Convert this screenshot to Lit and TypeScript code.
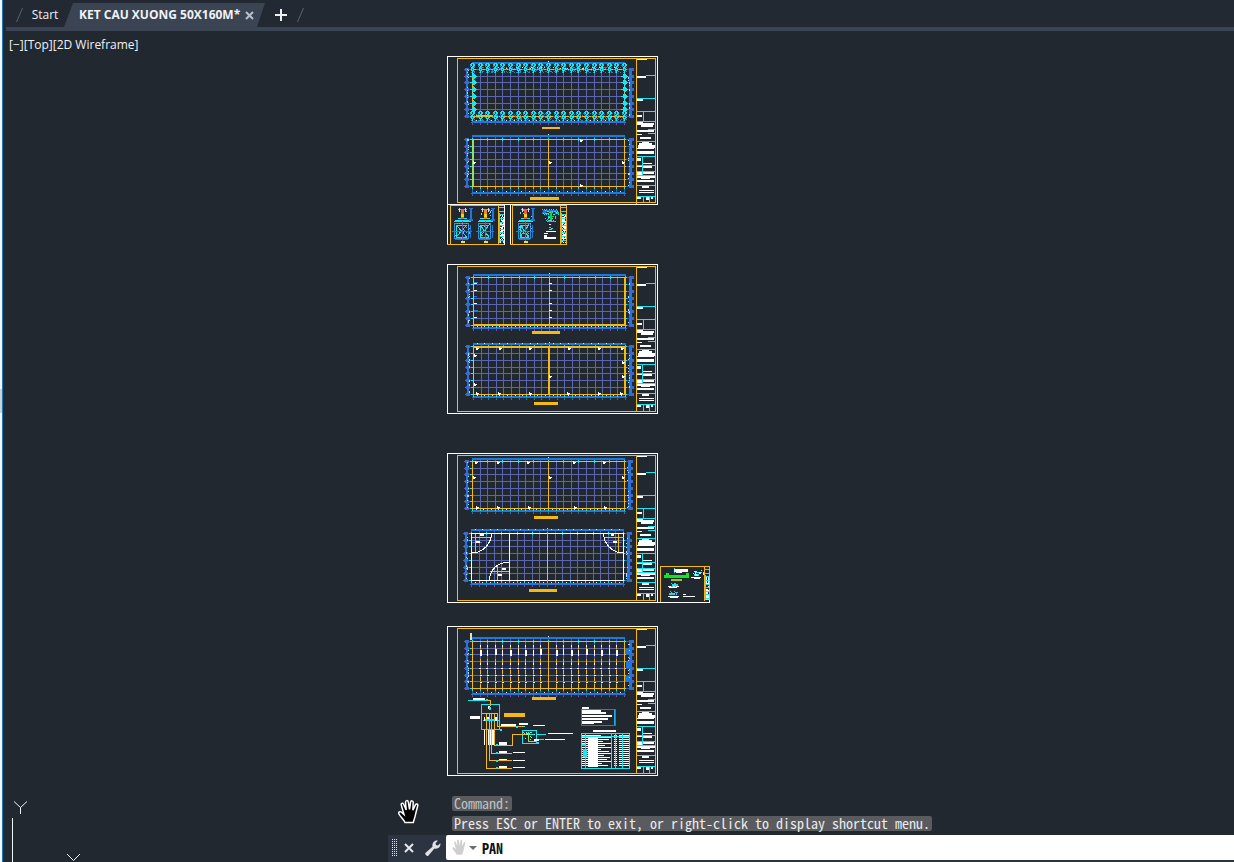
import { LitElement, html, svg, css } from "lit";
import { customElement } from "lit/decorators.js";

const WHITE = "#ffffff";
const GOLD = "#f5b914";
const CYAN = "#19e6ee";
const BLUE = "#1b7ae0";
const GRID = "#5c66ae";

type Box = [number, number, number, number];

const fill = (c: string, boxes: Box[]) => svg`<path fill=${c} d=${boxes
  .map(([x, y, w, h]) => `M${x} ${y}h${w}v${h}h${-w}z`)
  .join("")}></path>`;
const stroke = (c: string, d: string, w = 1) =>
  svg`<path fill="none" stroke=${c} stroke-width=${w} d=${d}></path>`;

/* Repeatable pixel noise for lettering too small to read. */
const noise = (seed: number) => {
  let s = seed * 7919 + 13;
  return () => ((s = (s * 16807) % 2147483647) / 2147483647);
};
const specks = (seed: number, c: string, x: number, y: number, w: number, h: number, density: number) => {
  const r = noise(seed);
  const out: Box[] = [];
  for (let j = 0; j < h; j++)
    for (let i = 0; i < w; i++) if (r() < density) out.push([x + i, y + j, 1, 1]);
  return fill(c, out);
};

/* Title block, measured in thirds of a unit from the sheet's corner. */
const TITLE_TEXT: Box[] = [
  [20, 6, 30, 6], [20, 60, 28, 6], [20, 129, 17, 6], [20, 177, 15, 6], [20, 195, 18, 6], [20, 201, 52, 5],
  [34, 207, 36, 5], [20, 221, 52, 6], [22, 233, 14, 4], [30, 243, 34, 6], [36, 257, 22, 4], [28, 261, 40, 6],
  [23, 267, 50, 9], [21, 276, 51, 4], [21, 285, 51, 10], [22, 307, 12, 9], [40, 321, 26, 3], [22, 327, 14, 6], [40, 331, 28, 5],
  [22, 345, 14, 12], [38, 348, 32, 6], [20, 360, 53, 6], [32, 366, 28, 3], [22, 371, 50, 6], [36, 390, 20, 6],
  [26, 401, 44, 3], [26, 408, 44, 3], [22, 422, 12, 6], [48, 422, 8, 9], [64, 422, 7, 6],
];
const titleBlock = (top: number) => svg`
  ${fill(WHITE, TITLE_TEXT.map(([x, y, w, h]) =>
    [630 + Math.round(x / 3), top + Math.round(y / 3), Math.round(w / 3), Math.max(1, Math.round(h / 3))] as Box))}
  ${fill(CYAN, [43, 56, 66, 74, 78, 86, 101, 110, 116, 120, 130, 141]
    .map((d) => [d > 70 && d < 80 ? 648 : 637, top + d - 1, d > 70 && d < 80 ? 7 : 18, 1] as Box))}
  ${fill(CYAN, [[646, top + 19, 9, 1], [643, top + 55, 1, 10], [642, top + 100, 1, 20], [643, top + 140, 1, 7], [649, top + 140, 1, 7]])}
  ${fill(GOLD, [[636, top + 2, 1, 146]])}`;

const sheet = (top: number, height: number) => svg`
  ${titleBlock(top)}
  <rect x="447.5" y=${top + 0.5} width="210" height=${height} fill="none" stroke=${WHITE}></rect>
  <rect x="457.5" y=${top + 2.5} width="198" height=${height - 4} fill="none" stroke=${GOLD}></rect>`;

interface Plan {
  x: number; top: number; bottom: number;
  dimTop: number; dimBottom: number; right: number;
  label: Box; frame?: string; seed: number; dotsTop?: boolean;
}

const plan = (p: Plan) => {
  const w = 152;
  const h = p.bottom - p.top;
  const cols = Array.from({ length: 21 }, (_, i) => p.x + Math.round(i * 7.6));
  const rows = Array.from({ length: 8 }, (_, i) => p.top + Math.round((i * h) / 7));
  const x2 = p.x + w;
  const left = p.x - 6;
  return svg`
    ${stroke(GRID, cols.map((x) => `M${x + 0.5} ${p.top}v${h}`).join("") + rows.map((y) => `M${p.x} ${y + 0.5}h${w}`).join(""))}
    ${stroke("#2c62a8", cols.map((x) => `M${x + 0.5} ${p.dimTop}V${p.top}M${x + 0.5} ${p.bottom}V${p.dimBottom + 3}`).join("") +
      rows.map((y) => `M${left} ${y + 0.5}H${p.x}M${x2} ${y + 0.5}H${p.right + 2}`).join(""))}
    ${fill(BLUE, [[p.x, p.dimTop, w + 1, 2], [p.x, p.dimBottom, w + 1, 2], [left, p.top, 2, h], [p.right - 1, p.top, 3, h]])}
    ${fill("#3f68c9", [
      ...cols.map((x) => [x - 1, p.dimBottom + 1, 3, 1] as Box),
      ...rows.map((y) => [left - 1, y - 1, 4, 3] as Box),
      ...rows.map((y) => [p.right - 1, y - 1, 5, 3] as Box),
    ])}
    ${fill("#8c4da8", [...cols.map((x) => [x, p.dimBottom + 3, 1, 1] as Box), ...rows.map((y) => [left - 2, y, 1, 1] as Box)])}
    ${fill(CYAN, [
      ...cols.filter((_, i) => i % 2 === 0).map((x) => [x, p.top - 1, 1, 3] as Box),
      ...cols.map((x) => [x, p.bottom + 1, 1, 2] as Box),
      ...rows.map((y) => [p.x - 2, y, 3, 1] as Box),
      ...rows.map((y) => [x2, y, 2, 1] as Box),
    ])}
    ${fill("#d7ecff", [
      ...cols.slice(1).map((x) => [x - 4, p.dimBottom - 1, 1, 1] as Box),
      ...(p.dotsTop ? cols.slice(1).map((x) => [x - 4, p.dimTop, 1, 1] as Box) : []),
      [p.x + 76, p.dimTop - 1, 1, 1],
    ])}
    ${specks(p.seed, "#a9dcff", left + 1, p.top, 2, h, 0.16)}
    ${specks(p.seed + 3, "#a9dcff", p.right - 2, p.top, 2, h, 0.14)}
    <rect x=${p.x + 0.5} y=${p.top + 0.5} width=${w} height=${h} fill="none" stroke=${p.frame ?? GOLD}></rect>
    ${fill(GOLD, [p.label])}`;
};

const centre = (x: number, top: number, h: number, w = 1) => fill(GOLD, [[x, top, w, h]]);

/* Column footing mark on the foundation plan. */
const footing = (x: number, y: number) => svg`
  <path transform="translate(${x} ${y})" fill=${CYAN} d="M-1-5h3v1h1v2h-1v1h-1v1h1v1h1v1h-1v1h-1v2h-1v-2h-1v-1h-1v-1h1v-2h1v-1h-1v-1h-1v-1h1z"></path>
  <path transform="translate(${x} ${y})" fill="#1b9fc4" d="M-2-3h1v2h-1zM2-1h1v1h-1zM-2 1h1v1h-1zM2 3h1v1h-1zM-1 4h1v1h-1z"></path>
  <path transform="translate(${x} ${y})" fill="#1f3f5c" d="M0-4h1v2h-1zM0 1h1v1h-1z"></path>`;
const padRow = (x: number, y: number) =>
  svg`<path transform="translate(${x} ${y})" fill=${CYAN} d="M-3 0h2v-2h1v-1h1v1h1v1h1v1h1v1h-1v1h-1v1h-2v-1h-1v-1h-2z"></path>`;

const foundation = () => {
  const marks = [];
  for (let i = 0; i <= 20; i++) {
    const x = 472 + Math.round(i * 7.6);
    marks.push(footing(x, 68), footing(x, 116));
  }
  for (let i = 1; i < 7; i++) {
    const y = 69 + Math.round(i * 6.7);
    marks.push(padRow(473, y), padRow(624, y));
  }
  return svg`${specks(5, "#2f7fc4", 472, 65, 153, 8, 0.16)}${specks(6, "#2f7fc4", 472, 113, 153, 8, 0.16)}
    ${specks(7, "#cdf7b0", 472, 67, 153, 2, 0.1)}${marks}${fill("#c9c23c", [[476, 115, 17, 2]])}`;
};

const flags = (pts: [number, number][]) =>
  fill(WHITE, pts.flatMap(([x, y]) => [[x, y, 3, 1], [x, y - 1, 1, 3], [x + 1, y + 1, 1, 1]] as Box[]));

/* Section above the plan of one foundation type. */
const footingDetail = (x: number, y: number, w: number, seed: number, hot = "#f08a24") => {
  const mid = x + Math.floor(w / 2);
  return svg`
  ${specks(seed, "#8fc6ff", x + 2, y, w, 10, 0.1)}
  ${fill(BLUE, [[x + w, y, 2, 10], [x + w - 1, y + 10, 4, 2], [x + w - 1, y - 1, 4, 1]])}
  ${fill(CYAN, [[mid - 4, y, 9, 1], [x + 1, y + 11, w - 2, 1], [mid - 4, y + 9, 9, 1], [x, y + 12, w + 1, 1]])}
  ${fill("#d8dcf0", [[mid - 3, y - 1, 1, 4], [mid + 3, y - 1, 1, 4]])}
  ${fill(hot, [[mid - 1, y, 3, 10]])}
  ${fill("#f2d21c", [[mid - 1, y + 5, 3, 3]])}
  <rect x=${x + 0.5} y=${y + 14.5} width=${w - 2} height="15" fill="none" stroke="#2f8fd0"></rect>
  ${stroke(CYAN, `M${x + 2} ${y + 16}l${w - 5} 12M${x + w - 3} ${y + 16}l${-(w - 5)} 12M${x + 2} ${y + 16.5}h${w - 5}M${x + 2} ${y + 28.5}h${w - 5}M${x + 2.5} ${y + 16}v12`)}
  ${stroke(GRID, `M${x - 2} ${y + 22.5}h${w + 4}M${mid + 0.5} ${y + 12}v20`)}
  ${specks(seed + 20, "#55b8ff", x, y + 14, w, 16, 0.1)}
  ${fill(BLUE, [[x + 1, y + 30, w - 3, 1], [x + w, y + 16, 1, 13]])}
  ${fill("#e7e33a", [[mid - 1, y + 32, 4, 2]])}`;
};

/* Narrow title strip of a detail sheet. */
const smallTitle = (x: number, y: number, w: number, h: number, seed: number) => svg`
  ${specks(seed, WHITE, x + 2, y + 9, w - 2, h - 10, 0.6)}
  ${fill(CYAN, [2, 6, 9, 13, 17, 20, 24, 27, 31, 35].filter((d) => d < h).map((d) => [x, y + d, w, 1] as Box))}
  ${fill(CYAN, [[x + 1, y + 8, 1, h - 9]])}
  ${stroke(GOLD, `M${x + 0.5} ${y}v${h}`)}`;

const detailSheets = () => svg`
  ${smallTitle(498, 205, 6, 39, 31)}
  ${footingDetail(454, 209, 16, 41, "#ee6a3a")}
  ${footingDetail(478, 209, 14, 47)}
  ${stroke(GOLD, "M450.5 244V205.5H504M447 244.5H504")}
  ${stroke(WHITE, "M447.5 204V244M504.5 205V245")}
  ${smallTitle(560, 205, 6, 39, 37)}
  ${footingDetail(518, 209, 14, 53, "#ee5a4a")}
  ${fill(BLUE, [[543, 210, 15, 2], [542, 212, 4, 2], [555, 212, 4, 2]])}
  ${specks(61, CYAN, 541, 209, 18, 6, 0.35)}
  ${fill("#10d93a", [[550, 211, 2, 11], [548, 216, 6, 1], [547, 221, 8, 1]])}
  ${specks(62, "#4ccfe0", 545, 216, 11, 6, 0.3)}
  ${fill(CYAN, [[549, 227, 2, 1], [551, 228, 2, 1], [549, 229, 3, 1]])}
  ${fill(WHITE, [[546, 231, 10, 1], [544, 233, 4, 1], [544, 235, 3, 2], [544, 237, 12, 2], [549, 224, 2, 1]])}
  ${stroke(GOLD, "M512.5 244V205.5H566.5V244.5H510")}
  ${stroke(WHITE, "M510.5 205V244")}`;

const arcs = () => svg`
  ${stroke(GRID, "M472 542.5h10M604 542.5h18")}
  ${stroke(GOLD, "M475.5 534v19M472 537.5h20M618.5 534v19M604 537.5h20M497.5 566v14M490 571.5h19")}
  ${stroke(WHITE, "M509.5 533V580M491.5 533c0 10-8 20-20 20M603.5 533c0 10 8 20 20 20M489.5 580c0-10 8-18 20-18")}
  ${fill(WHITE, [[480, 534, 4, 2], [476, 541, 4, 2], [611, 534, 3, 2], [613, 541, 4, 2], [502, 568, 4, 2], [498, 574, 4, 2]])}`;

const sideSheet = () => svg`
  ${smallTitle(704, 567, 5, 34, 71)}
  ${fill("#0be81f", [[664, 575, 25, 3], [666, 573, 3, 2], [686, 573, 3, 2]])}
  ${fill(CYAN, [[674, 568, 1, 5], [666, 573, 1, 1], [672, 584, 5, 2], [670, 593, 5, 2], [694, 574, 5, 2], [696, 572, 6, 1]])}
  ${fill("#9ac229", [[671, 579, 11, 2]])}
  ${fill(WHITE, [[674, 569, 14, 3], [676, 572, 6, 1], [668, 586, 11, 1], [669, 587, 8, 1], [668, 596, 11, 1], [670, 597, 8, 1],
    [683, 594, 3, 1], [683, 596, 12, 1], [691, 577, 10, 1], [694, 578, 6, 1]])}
  ${specks(73, "#bfe8ff", 693, 570, 11, 6, 0.3)}
  ${specks(74, "#4ab4e8", 669, 583, 9, 4, 0.4)}
  ${specks(75, "#4ab4e8", 669, 591, 9, 4, 0.4)}
  ${stroke(GOLD, "M660.5 602V566.5H709.5V602")}
  ${stroke(WHITE, "M658 602.5h52M709.5 600v3")}`;

/* Lamp circuits on the electrical plan. */
const lighting = () => {
  const gold: Box[] = [];
  const white: Box[] = [];
  for (let i = 1; i < 20; i++) {
    if (i === 10) continue;
    const x = 472 + Math.round(i * 7.6);
    for (const y of [645, 659, 670, 677, 684]) gold.push([x, y, 1, 4]);
    white.push([x, 645, 1, 2], [x, i % 3 ? 650 : 649, i % 2 ? 2 : 1, 6], [x, 663, 1, 2], [x - 1, 668, 2, 1], [x, 675, 2, 1], [x, 682, 2, 1]);
  }
  return svg`${fill(GOLD, gold)}${fill(WHITE, white)}
    ${fill("#1b7ae0", [[625, 648, 4, 6], [626, 661, 4, 7], [625, 676, 4, 6]])}
    ${fill("#d8e8c0", [[470, 633, 2, 7]])}`;
};

const wiring = () => {
  const rows = Array.from({ length: 16 }, (_, i) => 735 + i * 2);
  return svg`
    ${fill(GOLD, [[504, 713, 21, 4]])}
    ${stroke(CYAN, "M481.5 704.5h18v25h-18zM522.5 730.5h14v13h-14zM468 700.5h18M517 726.5h8M483 720.5h16M524 734.5h10M536 734.5h10M536 739.5h8M528.5 732v9")}
    ${fill(WHITE, [[473, 698, 12, 2], [470, 716, 10, 3], [484, 730, 1, 15], [488, 730, 1, 15], [490, 730, 1, 15], [492, 730, 2, 15],
      [484, 717, 1, 4], [487, 717, 2, 3], [491, 716, 1, 4], [494, 717, 3, 4], [488, 706, 2, 3], [501, 724, 15, 2], [519, 723, 9, 2], [533, 725, 12, 1],
      [499, 742, 8, 3], [499, 751, 8, 3], [499, 759, 8, 2], [499, 766, 8, 2], [513, 752, 12, 1], [513, 760, 12, 1], [513, 767, 12, 1],
      [548, 733, 25, 1], [545, 739, 20, 1], [534, 739, 5, 2]])}
    ${stroke(GOLD, "M487 700.5H490.5V706M482 713.5h15M486.5 713V768.5H512M489.5 713V760.5H512M491.5 713V753.5H512M494.5 713V745.5H512.5V734.5H530M497.5 713V726.5H523")}
    ${fill(CYAN, [[485, 719, 10, 2], [496, 744, 2, 2], [496, 752, 2, 2], [496, 760, 2, 2], [496, 767, 2, 2], [516, 726, 2, 2], [486, 699, 2, 2],
      [500, 729, 2, 2], [489, 707, 2, 3], [537, 742, 2, 2]])}
    ${specks(81, "#8fe6c8", 523, 732, 13, 8, 0.15)}
    ${fill("#9ae04a", [[528, 734, 1, 8], [529, 741, 7, 1]])}
    ${fill(WHITE, [[582, 707, 7, 2], [582, 710, 19, 2], [582, 712, 24, 2], [582, 715, 30, 2], [582, 718, 26, 2], [582, 721, 20, 2], [582, 723, 12, 1],
      [593, 730, 23, 2]])}
    ${stroke(GRID, "M581.5 709.5h34v16h-34z")}
    ${stroke("#1fa8e8", "M614.5 710v15")}
    ${fill(WHITE, rows.map((y, i) => [589, y, [12, 22, 20, 14, 23, 16, 22, 12, 20, 23, 15, 21, 18, 23, 13, 19][i], 1] as Box))}
    ${fill(WHITE, rows.flatMap((y) => [[582, y, 3, 1], [586, y, 2, 1], [588, y, 10, 2], [614, y, 3, 1], [619, y, 3, 1], [623, y, 6, 1]] as Box[]))}
    ${stroke(CYAN, "M581.5 733.5h48v35h-48zM585.5 733v36M611.5 733v36M615.5 733v36M622.5 733v36M582 736.5h48")}
    ${fill(CYAN, [[583, 749, 4, 8], [582, 744, 3, 2]])}`;
};

const PLANS: Plan[] = [
  { x: 472, top: 69, bottom: 116, dimTop: 62, dimBottom: 121, right: 630, label: [542, 127, 18, 2], seed: 1 },
  { x: 472, top: 139, bottom: 186, dimTop: 135, dimBottom: 192, right: 630, label: [530, 197, 29, 3], seed: 2 },
  { x: 473, top: 277, bottom: 325, dimTop: 274, dimBottom: 327, right: 630, label: [532, 331, 28, 3], seed: 3 },
  { x: 473, top: 346, bottom: 394, dimTop: 343, dimBottom: 396, right: 630, label: [534, 402, 24, 3], seed: 4, dotsTop: true },
  { x: 472, top: 461, bottom: 508, dimTop: 458, dimBottom: 510, right: 629, label: [534, 516, 24, 3], seed: 5 },
  { x: 471, top: 533, bottom: 580, dimTop: 529, dimBottom: 583, right: 628, label: [529, 589, 28, 3], seed: 6, frame: WHITE, dotsTop: true },
  { x: 472, top: 641, bottom: 688, dimTop: 637, dimBottom: 693, right: 630, label: [532, 697, 24, 3], seed: 7 },
];

const drawing = () => svg`
  <g transform="translate(-3 -31)">
    ${sheet(56, 148)}${sheet(264, 149)}${sheet(453, 149)}${sheet(626, 149)}
    ${PLANS.map(plan)}
    ${foundation()}
    ${centre(548, 139, 48)}
    ${fill("#8fe06a", [[472, 140, 2, 46]])}
    ${flags([[473, 162], [549, 162], [622, 162], [580, 140], [580, 185]])}
    ${fill(GOLD, [[474, 324, 152, 2], [624, 277, 2, 48]])}
    ${stroke(GOLD, "M549.5 277v48")}
    ${fill(WHITE, [283, 290, 303, 310, 317].flatMap((y) => [[549, y, 3, 1], [474, y, 3, 1]] as Box[]))}
    ${fill(BLUE, [[474, 282, 4, 1], [474, 296, 3, 1], [474, 310, 4, 1]])}
    ${fill(GOLD, [[474, 346, 152, 2], [548, 346, 2, 49], [624, 346, 2, 49]])}
    ${flags([[476, 348], [499, 348], [529, 348], [568, 348], [598, 348], [621, 348], [476, 393], [498, 393], [529, 393], [567, 393],
      [598, 393], [620, 393], [474, 355], [474, 384], [549, 376], [622, 362], [622, 376]])}
    ${centre(548, 461, 48)}
    ${flags([[475, 462], [497, 462], [527, 462], [573, 462], [603, 462], [476, 507], [497, 507], [528, 507], [574, 507], [604, 507],
      [473, 477], [549, 477], [622, 477]])}
    ${centre(547, 533, 48)}${arcs()}
    ${centre(548, 641, 48)}${lighting()}${wiring()}
    ${detailSheets()}${sideSheet()}
    ${stroke("#f2f4f6", "M12.5 818V862")}
    <path shape-rendering="auto" fill="none" stroke="#f2f4f6" d="M14 801.5l6.500 6 6.500-6M20.500 807.500v6.500M67 854l6.500 6.500 6.500-6.500"></path>
  </g>`;

const HAND =
  "M7 23 C6 20 2 17 1 14.500 C0 12.500 2 11.500 3.500 12.800 L6 15 L3.300 5.600 C2.800 3.500 5 3 5.700 4.800 L8.200 10.500 L7.500 2.800 C7.500 .6 10 .6 10.300 2.600 L11.500 10 L12.600 2.600 C13 .8 15.300 1 15.200 3 L14.900 10.800 L17.400 5.400 C18.300 3.700 20.200 4.500 19.700 6.300 L17.500 15 C17 18 16 20 15.300 23 Z";

@customElement("app-root")
export class AppRoot extends LitElement {
  static styles = css`
    :host { display: block; font-family: "Open Sans", "Noto Sans", sans-serif; font-size: 12px; color: #f0f2f4; }
    * { box-sizing: border-box; }
    button { font: inherit; color: inherit; background: none; border: 0; padding: 0; margin: 0; display: flex; align-items: center; justify-content: center; }
    .window { height: 100vh; display: flex; background: #212830; overflow: hidden; }
    .edge { flex: none; width: 3px; background: #f4f6f7; border-right: 1px solid #1b76b5; display: flex; align-items: center; padding-bottom: 61px; }
    .handle { width: 2px; height: 24px; background: #ccd3d5; }
    .main { flex: 1; min-width: 0; display: flex; flex-direction: column; }
    .tabs { flex: none; display: flex; align-items: stretch; height: 31px; padding-left: 3px; background: linear-gradient(#3b4453, #3b4453) 3px 27px / 100% 4px no-repeat, #222933; padding-bottom: 4px; }
    .slash { width: 20px; height: 27px; fill: none; stroke: #5a626e; }
    .start { width: 38px; padding-top: 2px; }
    .tab { display: flex; justify-content: space-between; width: 201px; margin-top: 3px; padding: 0 11px 0 15px; background: #3b4453; clip-path: polygon(9px 0, 100% 0, calc(100% - 8px) 100%, 0 100%); }
    .name { font-weight: 700; white-space: nowrap; padding-bottom: 2px; }
    .close svg { width: 9px; height: 9px; stroke: #b9c0c9; stroke-width: 2; }
    .add { width: 31px; padding-top: 3px; }
    .add svg { width: 12px; height: 12px; stroke: #eef0f2; stroke-width: 2; }
    .view { position: relative; flex: 1; min-height: 0; }
    .model { position: absolute; inset: 0; width: 100%; height: 100%; }
    .viewmenu { position: absolute; top: 5px; left: 6px; line-height: 18px; display: flex; }
    .cursor { position: absolute; left: 395px; top: 768px; width: 21px; height: 26px; }
    .console { position: absolute; left: 385px; right: 0; bottom: 0; }
    .history { display: flex; flex-direction: column; align-items: flex-start; gap: 5px; padding: 0 0 4px 64px; }
    .line { margin: 0; padding: 0 2px; height: 15px; line-height: 15px; border-radius: 2px; background: #595b5e; color: #ececec; white-space: pre; }
    .old { color: #c0c2c3; }
    .history, .entry { font-family: "Noto Sans Mono CJK SC", "Liberation Mono", monospace; font-size: 14px; }
    .bar { display: flex; align-items: stretch; height: 27px; background: #2c3442; padding-bottom: 2px; }
    .grip { flex: none; width: 10px; height: 25px; stroke: #e2e4e7; stroke-dasharray: 1 1; }
    .tool { width: 22px; }
    .tool.wrench { width: 26px; }
    .tool svg { width: 16px; height: 16px; }
    .field { flex: 1; display: flex; align-items: center; background: #fff; padding-left: 4px; border-radius: 2px 0 0 2px; }
    .recent { gap: 2px; width: 28px; }
    .entry { flex: 1; min-width: 0; border: 0; outline: 0; background: none; padding: 0; margin-left: 4px; color: #101216; font-weight: 700; }
  `;

  render() {
    return html`
      <div class="window">
        <div class="edge"><div class="handle"></div></div>
        <div class="main">
          <nav class="tabs" aria-label="Drawings">
            <svg class="slash" viewBox="0 0 20 27"><path d="M10.500 22L16.500 8"></path></svg>
            <button class="start">Start</button>
            <div class="tab">
              <button class="name">KET CAU XUONG 50X160M*</button>
              <button class="close" aria-label="Close drawing"><svg viewBox="0 0 9 9"><path d="M1 1l7 7M8 1l-7 7"></path></svg></button>
            </div>
            <button class="add" aria-label="New drawing"><svg viewBox="0 0 12 12"><path d="M6 0v12M0 6h12"></path></svg></button>
            <svg class="slash" viewBox="0 0 20 27"><path d="M1.500 22L7.500 8"></path></svg>
          </nav>
          <main class="view">
            <svg class="model" shape-rendering="crispEdges" role="img" aria-label="Model space">${drawing()}</svg>
            <div class="viewmenu"><button>[−]</button><button>[Top]</button><button>[2D Wireframe]</button></div>
            <svg class="cursor" viewBox="0 0 21 25"><path d=${HAND} fill="#000" stroke="#fff" stroke-width="1.500"></path></svg>
            <section class="console" aria-label="Command line">
              <div class="history">
                <p class="line old">Command:</p>
                <p class="line">Press ESC or ENTER to exit, or right-click to display shortcut menu.</p>
              </div>
              <div class="bar">
                <svg class="grip" viewBox="0 0 10 25" shape-rendering="crispEdges"><path d="M4.500 4v17M6.500 4v17M8.500 4v17"></path></svg>
                <button class="tool" aria-label="Close"><svg viewBox="0 0 16 16"><path d="M4 4l8 8M12 4l-8 8" stroke="#e6e8ea" stroke-width="2"></path></svg></button>
                <button class="tool wrench" aria-label="Customize"><svg viewBox="0 0 16 16"><path fill="#dfe1e3" d="M2 16 L.500 14.500 C0 13.800 0 13.300 .600 12.700 L7.500 6.800 C7 4 8 1.800 10 1 C11 .500 12 .500 12.800 .800 L10.500 3.200 L11 5 L12.900 5.500 L15.300 3.200 C15.800 5.500 14.500 7.600 12.800 8.300 C11.500 8.900 10.500 8.800 9.400 8.500 L3.500 15.500 C3 16.200 2.500 16.300 2 16 Z"></path></svg></button>
                <div class="field">
                  <button class="recent" aria-label="Recent commands">
                    <svg width="16" height="17" viewBox="0 0 21 25"><path d=${HAND} fill="#cfcfcf"></path></svg>
                    <svg width="8" height="4" viewBox="0 0 8 4"><path d="M0 0h8L4 4z" fill="#6b6b6b"></path></svg>
                  </button>
                  <input class="entry" aria-label="Command" value="PAN" />
                </div>
              </div>
            </section>
          </main>
        </div>
      </div>`;
  }
}
